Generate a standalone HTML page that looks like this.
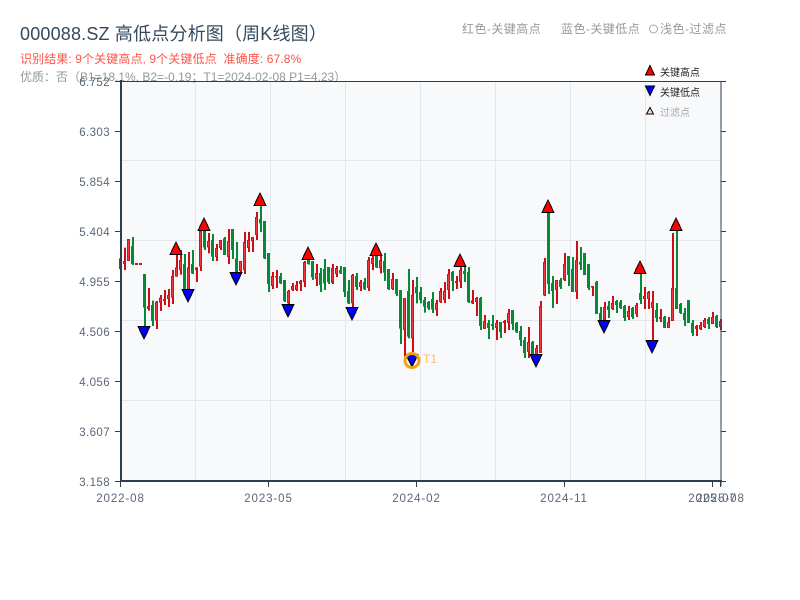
<!DOCTYPE html>
<html lang="zh">
<head>
<meta charset="utf-8">
<title>000088.SZ 高低点分析图</title>
<style>
html,body{margin:0;padding:0;background:#fff;}
body{width:800px;height:600px;overflow:hidden;position:relative;font-family:"Liberation Sans","Noto Sans CJK SC",sans-serif;}
svg{position:absolute;left:0;top:0;}
text{font-family:"Liberation Sans","Noto Sans CJK SC",sans-serif;}
.yl{font-size:11.5px;fill:#5a6677;text-anchor:end;letter-spacing:.4px;}
.xl{font-size:11.5px;fill:#5a6677;text-anchor:middle;letter-spacing:.9px;}
.ns{fill:none;}
.mk{shape-rendering:crispEdges;}
</style>
</head>
<body>
<svg width="800" height="600" viewBox="0 0 800 600">
<rect x="121" y="81" width="600" height="400" fill="#f8f9fb"/>
<path d="M195.5 81V481M270.5 81V481M345.5 81V481M420.5 81V481M495.5 81V481M570.5 81V481M645.5 81V481M120 160.5H721M120 240.5H721M120 320.5H721M120 400.5H721" stroke="#e3e6eb" stroke-width="1" fill="none"/>

<text x="20" y="40" font-size="18" fill="#34495e" letter-spacing=".18">000088.SZ 高低点分析图（周K线图）</text>
<text x="20" y="63" font-size="12" fill="#ff5349" letter-spacing=".1">识别结果: 9个关键高点, 9个关键低点&#160;&#160;准确度: 67.8%</text>
<text x="20" y="81" font-size="12" fill="#8d9a9c">优质：否（B1=18.1%, B2=-0.19；T1=2024-02-08 P1=4.23）</text>
<text x="462" y="33" font-size="12" fill="#999" letter-spacing=".45">红色-关键高点</text>
<text x="561" y="33" font-size="12" fill="#999" letter-spacing=".45">蓝色-关键低点</text>
<circle cx="653.5" cy="29" r="4" fill="none" stroke="#a8a8a8" stroke-width="1"/>
<text x="660" y="33" font-size="12" fill="#999" letter-spacing=".5">浅色-过滤点</text>

<g transform="translate(121,190) scale(4,.33333)">
<path class="ns" stroke="#cc0f16" stroke-width=".5" d="M0 205V237M1 173V240M2 147V213M7 294V362M9 333V417M10 315V363M11 300V345M12 297V351M13 240V342M14 192V260M15 180V254M17 186V298M19 232V276M20 122V243M22 129V190M24 162V213M25 150V180M27 117V222M30 213V250M31 126V252M32 126V186M33 141V186M34 66V150M38 246V297M39 240V294M42 300V345M43 279V303M44 273V303M45 270V303M46 213V291M49 222V288M53 222V282M54 228V261M58 252V354M60 270V303M62 201V303M63 198V240M65 195V250M68 249V300M71 324V500M73 270V500M79 330V378M80 294V339M81 276V339M82 237V327M84 258V297M85 231V294M88 300V342M89 321V378M91 375V417M94 390V450M96 390V429M97 357V420M102 411V504M104 465V505M105 333V489M106 204V318M109 270V342M111 189V273M114 153V327M118 288V318M121 336V390M123 318V360M127 348V390M129 339V381M131 291V357M132 303V357M133 303V450M135 357V396M137 381V414M138 129V393M144 405V438M145 396V420M146 384V414M148 366V402M150 387V420"/>
<path class="ns" stroke="#068a38" stroke-width=".5" d="M3 141V225M6 252V410M8 332V408M16 192V297M18 180V252M21 120V180M23 132V213M26 141V195M28 117V207M29 156V250M35 45V126M36 93V207M37 189V306M40 249V282M41 270V336M47 208V224M48 213V270M50 234V306M51 207V300M52 231V282M55 228V252M56 231V321M57 270V342M59 249V300M61 264V300M64 195V234M66 189V273M67 237V300M69 267V318M70 300V462M72 237V445M74 261V340M75 291V340M76 321V368M77 333V360M78 306V369M83 243V303M86 225V276M87 231V339M90 321V420M92 390V447M93 375V420M95 396V444M98 360V420M99 396V429M100 408V468M101 441V504M103 453V504M107 68V312M108 258V354M110 264V297M112 198V288M113 201V306M115 171V240M116 189V255M117 222V300M119 273V372M120 351V390M122 333V384M124 330V369M125 330V357M126 345V393M128 351V387M130 250V342M134 339V396M136 378V414M139 122V357M140 339V372M141 354V408M142 330V399M143 390V438M147 381V417M149 375V414"/>
</g>
<g transform="translate(120.5,190) scale(4,.33333)">
<path class="ns" stroke="#d4101a" stroke-width=".75" d="M0 205V237M1 213V222M2 147V213M4 219V225M5 219V225M7 348V357M9 335V392M10 323V338M11 327V333M12 315V327M13 258V323M14 232V260M15 210V240M17 232V298M19 232V240M20 122V230M22 153V172M24 174V201M25 150V174M27 153V201M30 213V243M31 156V240M32 150V174M33 141V153M34 81V135M38 258V288M39 258V262M42 303V340M43 288V300M44 285V300M45 273V282M46 216V276M49 249V267M53 234V279M54 234V252M58 255V340M60 276V291M62 210V294M63 204V222M65 210V235M68 267V297M71 324V420M73 315V445M79 339V360M80 303V336M81 303V330M82 252V300M84 273V279M85 240V276M88 331V340M89 324V336M91 393V417M94 399V414M96 393V399M97 369V399M102 456V486M104 474V495M105 348V489M106 216V316M109 270V300M111 222V270M114 210V306M118 288V293M121 351V390M123 339V357M127 363V381M129 345V372M131 318V327M132 306V327M133 336V354M135 381V387M137 396V414M138 294V393M144 408V417M145 405V417M146 390V411M148 381V402M150 393V411"/>
<path class="ns" stroke="#ee3a3e" stroke-width=".25" d="M0 208V234M1 216V219M2 150V210M7 351V354M9 338V389M10 326V335M12 318V324M13 261V320M14 235V257M15 213V237M17 235V295M20 125V227M22 156V169M24 177V198M25 153V171M27 156V198M30 216V240M31 159V237M32 153V171M33 144V150M34 84V132M38 261V285M42 306V337M43 291V297M44 288V297M45 276V279M46 219V273M49 252V264M53 237V276M54 237V249M58 258V337M60 279V288M62 213V291M63 207V219M65 213V232M68 270V294M71 327V417M73 318V442M79 342V357M80 306V333M81 306V327M82 255V297M85 243V273M89 327V333M91 396V414M94 402V411M97 372V396M102 459V483M104 477V492M105 351V486M106 219V313M109 273V297M111 225V267M114 213V303M121 354V387M123 342V354M127 366V378M129 348V369M131 321V324M132 309V324M133 339V351M137 399V411M138 297V390M145 408V414M146 393V408M148 384V399M150 396V408"/>
<path class="ns" stroke="#068a38" stroke-width=".75" d="M3 168V222M6 252V353M8 345V393M16 222V297M18 222V250M21 120V172M23 150V200M26 145V195M28 117V180M29 205V250M35 87V100M36 93V205M37 189V282M40 258V280M41 270V333M47 210V222M48 213V262M50 249V285M51 237V280M52 231V276M55 240V250M56 231V306M57 303V340M59 258V291M61 276V297M64 198V232M66 213V248M67 237V297M69 267V312M70 300V416M72 303V440M74 291V310M75 306V330M76 330V350M77 336V355M78 327V358M83 246V273M86 243V252M87 246V336M90 324V408M92 399V414M93 402V408M95 396V426M98 360V402M99 399V426M100 423V450M101 450V489M103 456V500M107 68V282M108 279V303M110 270V291M112 198V255M113 237V306M115 216V224M116 189V255M117 222V294M119 276V372M120 369V390M122 348V360M124 333V345M125 336V354M126 348V384M128 354V381M130 309V330M134 360V384M136 381V414M139 294V357M140 342V369M141 369V390M142 330V399M143 399V429M147 387V402M149 378V411"/>
</g>

<!-- key highs -->
<g fill="#ff0000" stroke="#000" stroke-width="1" class="mk">
<polygon points="176,242 170,254.5 182,254.5"/>
<polygon points="204,218 198,230.5 210,230.5"/>
<polygon points="260,193 254,205.5 266,205.5"/>
<polygon points="308,247 302,259.5 314,259.5"/>
<polygon points="376,243 370,255.5 382,255.5"/>
<polygon points="460,254 454,266.5 466,266.5"/>
<polygon points="548,200 542,212.5 554,212.5"/>
<polygon points="640,261 634,273.5 646,273.5"/>
<polygon points="676,218 670,230.5 682,230.5"/>
</g>
<!-- key lows -->
<g fill="#0000ff" stroke="#000" stroke-width="1" class="mk">
<polygon points="144,339 138,326.5 150,326.5"/>
<polygon points="188,302 182,289.5 194,289.5"/>
<polygon points="236,285 230,272.5 242,272.5"/>
<polygon points="288,317 282,304.5 294,304.5"/>
<polygon points="352,320 346,307.5 358,307.5"/>
<polygon points="412,367 406,354.5 418,354.5"/>
<polygon points="536,367 530,354.5 542,354.5"/>
<polygon points="604,333 598,320.5 610,320.5"/>
<polygon points="652,353 646,340.5 658,340.5"/>
</g>
<circle cx="412" cy="360.5" r="7" fill="none" stroke="#f5a00f" stroke-width="3"/>
<text x="423" y="363" font-size="12" fill="#f8c070">T1</text>

<!-- axes -->
<path d="M121 81.5H721" stroke="#2c3e50" stroke-width="1" fill="none"/>
<path d="M721 81V486" stroke="#2c3e50" stroke-width="1" fill="none"/>
<path d="M121 80V482" stroke="#2c3e50" stroke-width="2" fill="none"/>
<path d="M120 481H722" stroke="#2c3e50" stroke-width="2" fill="none"/>
<path d="M115 81.5H121M115 131.5H121M115 181.5H121M115 231.5H121M115 281.5H121M115 331.5H121M115 381.5H121M115 431.5H121M115 481.5H121M721 81.5H726M721 131.5H726M721 181.5H726M721 231.5H726M721 281.5H726M721 331.5H726M721 381.5H726M721 431.5H726M721 481.5H726M120.5 482V487M268.5 482V487M416.5 482V487M564.5 482V487M712.5 482V487M720.5 482V487" stroke="#2c3e50" stroke-width="1" fill="none"/>

<text class="yl" x="110" y="86">6.752</text>
<text class="yl" x="110" y="136">6.303</text>
<text class="yl" x="110" y="186">5.854</text>
<text class="yl" x="110" y="236">5.404</text>
<text class="yl" x="110" y="286">4.955</text>
<text class="yl" x="110" y="336">4.506</text>
<text class="yl" x="110" y="386">4.056</text>
<text class="yl" x="110" y="436">3.607</text>
<text class="yl" x="110" y="486">3.158</text>
<text class="xl" x="120.5" y="502">2022-08</text>
<text class="xl" x="268.5" y="502">2023-05</text>
<text class="xl" x="416.5" y="502">2024-02</text>
<text class="xl" x="564" y="502">2024-11</text>
<text class="xl" x="712.5" y="502">2025-07</text>
<text class="xl" x="720.5" y="502">2025-08</text>

<!-- legend -->
<polygon points="650,65.5 645.5,75 654.5,75" fill="#ff0000" stroke="#000" stroke-width="1"/>
<text x="660" y="76" font-size="10" fill="#222">关键高点</text>
<polygon points="650,95.5 645.5,86 654.5,86" fill="#0000ff" stroke="#000" stroke-width="1"/>
<text x="660" y="96" font-size="10" fill="#222">关键低点</text>
<polygon points="650,107.5 646.5,114 653.5,114" fill="#ffd9d9" stroke="#000" stroke-width="1"/>
<text x="660" y="116" font-size="10" fill="#aaa">过滤点</text>
</svg>
</body>
</html>
